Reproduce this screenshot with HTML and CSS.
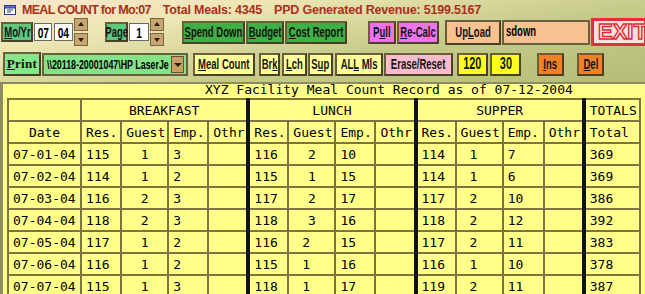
FILE: index.html
```html
<!doctype html>
<html lang="en">
<head>
<meta charset="UTF-8">
<title>Meal Count</title>
<link rel="stylesheet" href="styles.css">
</head>
<body>
<div class="top">
	<div class="head">
		<svg class="ico" width="14" height="14" viewBox="0 0 14 14">
			<rect x="1.5" y="2.5" width="11" height="9" fill="#fff" stroke="#2a3a8a"/>
			<rect x="1.5" y="2.5" width="11" height="2.5" fill="#5a7ac8" stroke="#2a3a8a"/>
			<path d="M4 7h6M4 9h4" stroke="#2a3a8a"/>
		</svg>
		<span class="t1">MEAL COUNT for Mo:07</span>
		<span class="t2">Total Meals: 4345</span>
		<span class="t3">PPD Generated Revenue: 5199.5167</span>
	</div>
	<div class="row r1">
		<div class="grp g1">
			<span class="btn lgreen moyr"><b><u>M</u>o/Yr</b></span>
			<span class="inp in07"><b>07</b></span>
			<span class="inp in04"><b>04</b></span>
			<span class="spin"><i class="up"></i><i class="dn"></i></span>
		</div>
		<div class="grp g2">
			<span class="btn lgreen page"><b>Page</b></span>
			<span class="inp in1"><b>1</b></span>
			<span class="spin"><i class="up"></i><i class="dn"></i></span>
		</div>
		<div class="grp g3">
			<span class="btn green spend"><b><u>S</u>pend Down</b></span>
			<span class="btn green budget"><b><u>B</u>udget</b></span>
			<span class="btn green cost"><b><u>C</u>ost Report</b></span>
		</div>
		<div class="grp g4">
			<span class="btn pink pull"><b>P<u>u</u>ll</b></span>
			<span class="btn pink recalc"><b><u>R</u>e-Calc</b></span>
		</div>
		<div class="grp g5">
			<span class="btn peach upload"><b>Up<u>L</u>oad</b></span>
			<span class="field"><b>sdown</b></span>
			<span class="exit">EXIT</span>
		</div>
	</div>
	<div class="row r2">
		<div class="grp p1">
			<span class="btn print"><u>P</u>rint</span>
			<span class="sel"><b>\\20118-20001047\HP LaserJe</b><i class="arr"></i></span>
		</div>
		<div class="grp p2">
			<span class="btn yel meal"><b><u>M</u>eal Count</b></span>
			<span class="btn yel brk"><b>Br<u>k</u></b></span>
			<span class="btn yel lch"><b><u>L</u>ch</b></span>
			<span class="btn yel sup"><b>S<u>u</u>p</b></span>
			<span class="btn yel all"><b>AL<u>L</u> Mls</b></span>
			<span class="btn rose erase"><b>Erase/Reset</b></span>
		</div>
		<div class="grp p3">
			<span class="btn lemon num"><b>120</b></span>
			<span class="btn lemon num"><b>30</b></span>
		</div>
		<span class="btn orange ins"><b><u>I</u>ns</b></span>
		<span class="btn orange del"><b><u>D</u>el</b></span>
	</div>
</div>
<div class="panel">
	<div class="cap">XYZ Facility Meal Count Record as of 07-12-2004</div>
	<table class="grid">
		<colgroup>
			<col class="w-date"><col class="w-res"><col class="w-gst"><col class="w-emp"><col class="w-oth">
			<col class="w-res"><col class="w-gst"><col class="w-emp"><col class="w-oth">
			<col class="w-res"><col class="w-gst"><col class="w-emp2"><col class="w-oth">
			<col class="w-tot">
		</colgroup>
		<tr>
			<th></th>
			<th colspan="4" class="c">BREAKFAST</th>
			<th colspan="4" class="c sep">LUNCH</th>
			<th colspan="4" class="c sep">SUPPER</th>
			<th class="sep">TOTALS</th>
		</tr>
		<tr>
			<th class="c">Date</th><th>Res.</th><th>Guest</th><th>Emp.</th><th>Othr</th>
			<th class="sep">Res.</th><th>Guest</th><th>Emp.</th><th>Othr</th>
			<th class="sep">Res.</th><th>Guest</th><th>Emp.</th><th>Othr</th>
			<th class="sep">Total</th>
		</tr>
		<tr><td>07-01-04</td><td>115</td><td class="c">1</td><td>3</td><td></td><td class="sep">116</td><td class="c">2</td><td>10</td><td></td><td class="sep">114</td><td class="g">1</td><td>7</td><td></td><td class="sep">369</td></tr>
		<tr><td>07-02-04</td><td>114</td><td class="c">1</td><td>2</td><td></td><td class="sep">115</td><td class="c">1</td><td>15</td><td></td><td class="sep">114</td><td class="g">1</td><td>6</td><td></td><td class="sep">369</td></tr>
		<tr><td>07-03-04</td><td>116</td><td class="c">2</td><td>3</td><td></td><td class="sep">117</td><td class="c">2</td><td>17</td><td></td><td class="sep">117</td><td class="g">2</td><td>10</td><td></td><td class="sep">386</td></tr>
		<tr><td>07-04-04</td><td>118</td><td class="c">2</td><td>3</td><td></td><td class="sep">118</td><td class="c">3</td><td>16</td><td></td><td class="sep">118</td><td class="g">2</td><td>12</td><td></td><td class="sep">392</td></tr>
		<tr><td>07-05-04</td><td>117</td><td class="c">1</td><td>2</td><td></td><td class="sep">116</td><td class="g">2</td><td>15</td><td></td><td class="sep">117</td><td class="g">2</td><td>11</td><td></td><td class="sep">383</td></tr>
		<tr><td>07-06-04</td><td>116</td><td class="c">1</td><td>2</td><td></td><td class="sep">115</td><td class="g">1</td><td>16</td><td></td><td class="sep">116</td><td class="g">1</td><td>10</td><td></td><td class="sep">378</td></tr>
		<tr><td>07-07-04</td><td>115</td><td class="c">1</td><td>3</td><td></td><td class="sep">118</td><td class="g">1</td><td>17</td><td></td><td class="sep">119</td><td class="g">2</td><td>11</td><td></td><td class="sep">387</td></tr>
	</table>
</div>
</body>
</html>
```

FILE: styles.css
```css
*{margin:0;padding:0;box-sizing:border-box;}
body{
	width:645px;
	height:294px;
	overflow:hidden;
	background:#b8bf7c;
	font-family:"Liberation Sans",sans-serif;
}
.top{
	height:82px;
	background:linear-gradient(170deg,#f8e6cc 0%,#eee6b4 25%,#c6cb8a 60%,#b4bd76 100%);
}
.head{
	display:flex;
	align-items:center;
	height:17px;
	padding:2px 0 0 3px;
	font-weight:bold;
	font-size:12.5px;
	color:#a8301c;
	white-space:nowrap;
}
.ico{margin-right:5px;}
.t1{letter-spacing:-0.7px;}
.t2{margin-left:12px;letter-spacing:-0.2px;}
.t3{margin-left:12px;letter-spacing:-0.2px;}
.row{display:flex;align-items:center;}
.r1{height:30px;}
.r2{height:26px;margin-top:4px;}
.grp{display:flex;align-items:center;gap:1px;}
.g1{margin-left:1px;}
.g2{margin-left:17px;}
.g3{margin-left:18px;}
.g4{margin-left:21px;}
.g5{margin-left:6px;}
.p1{margin-left:3px;}
.p2{margin-left:5px;gap:2px;}
.p3{margin-left:4px;gap:2px;}

/* condensed look: the bold face squeezed sideways */
.btn b,.inp b,.field b,.sel b{
	display:inline-block;
	transform:scaleX(.68);
	white-space:nowrap;
}
.btn{
	display:flex;
	align-items:center;
	justify-content:center;
	height:23px;
	border:2px solid #6a5e3c;
	border-right-color:#4a4028;
	border-bottom-color:#4a4028;
	font-weight:bold;
	font-size:14px;
	color:#141414;
	white-space:nowrap;
}
.btn u{text-decoration-thickness:1px;text-underline-offset:1px;}
.lgreen{background:#5ec87c;height:20px;}
.green{background:#3fb044;}
.pink{background:#ee74ee;}
.peach{background:#f8c290;}
.yel{background:#ffff9a;}
.rose{background:#f8bccc;}
.lemon{background:#ffff14;font-size:16px;}
.orange{background:#f08224;}

.moyr{width:32px;}
.page{width:23px;}
.spend{width:63px;}
.budget{width:38px;}
.cost{width:62px;}
.pull{width:28px;}
.recalc{width:42px;}
.upload{width:56px;height:25px;}
.print{
	width:38px;
	height:24px;
	background:#88e68a;
	font-family:"Liberation Serif",serif;
	font-size:13px;
	letter-spacing:0.3px;
}
.meal{width:62px;}
.brk{width:21px;margin-left:2px;}
.lch{width:25px;}
.sup{width:25px;margin-left:-1px;}
.all{width:48px;}
.erase{width:69px;margin-left:-1px;}
.num{width:31px;}
.ins{width:27px;margin-left:16px;}
.del{width:27px;margin-left:13px;}

.inp{
	display:flex;
	align-items:center;
	justify-content:center;
	height:18px;
	background:#fff;
	border:1px solid #6a6a6a;
	font-weight:bold;
	font-size:15px;
}
.in07{width:18px;}
.in04{width:19px;margin-left:1px;}
.in1{width:20px;}
.spin{display:flex;flex-direction:column;gap:2px;width:14px;}
.spin i{
	display:block;
	height:13px;
	background:#c8a672;
	border:1px solid #7a6440;
	position:relative;
}
.spin i::after{
	content:'';
	position:absolute;
	left:3px;
	border-left:3px solid transparent;
	border-right:3px solid transparent;
}
.spin .up::after{top:3px;border-bottom:4px solid #2a2010;}
.spin .dn::after{top:4px;border-top:4px solid #2a2010;}

.field{
	width:88px;
	height:25px;
	padding:1px 0 0 2px;
	background:#f8c290;
	border:2px solid #6a5e3c;
	font-weight:bold;
	font-size:14px;
}
.field b{transform-origin:left center;}
.exit{
	width:56px;
	height:28px;
	padding-left:4px;
	background:#fbe0e0;
	border:3px solid #e0303a;
	font-weight:bold;
	font-size:22px;
	line-height:22px;
	color:#ffeaea;
	-webkit-text-stroke:1.4px #e32a32;
}
.sel{
	display:flex;
	align-items:center;
	width:146px;
	height:23px;
	padding:0 2px 0 3px;
	background:#86e287;
	border:2px solid #6a5e3c;
	font-weight:bold;
	font-size:13px;
	white-space:nowrap;
	overflow:hidden;
}
.sel b{transform-origin:left center;margin-right:-60px;}
.arr{
	flex:none;
	width:13px;
	height:17px;
	margin-left:auto;
	background:#c8a066;
	border:1px solid #6a5030;
	position:relative;
}
.arr::after{
	content:'';
	position:absolute;
	left:2px;
	top:6px;
	border-left:4px solid transparent;
	border-right:4px solid transparent;
	border-top:4px solid #2a2010;
}

.panel{
	height:212px;
	background:#ffff8a;
	border-left:3px solid #8e8a66;
	border-top:2px solid #8e8a66;
	padding-left:4px;
	font-family:"DejaVu Sans Mono",monospace;
	font-size:13px;
	color:#000;
}
.cap{
	height:14px;
	line-height:12px;
	padding-left:198px;
	white-space:pre;
}
.grid{
	border-collapse:collapse;
	table-layout:fixed;
	width:634px;
}
.grid th,.grid td{
	height:22px;
	padding:0 0 0 4px;
	border:2px solid #7c7440;
	font-weight:normal;
	text-align:left;
	white-space:nowrap;
	overflow:hidden;
}
.grid .c{text-align:center;padding-left:0;}
.grid .g{padding-left:13px;}
.grid .sep{border-left:4px solid #111;}
.w-date{width:73px;}
.w-res{width:40px;}
.w-gst{width:47px;}
.w-emp{width:40px;}
.w-emp2{width:41px;}
.w-oth{width:40px;}
.w-tot{width:56px;}
```
